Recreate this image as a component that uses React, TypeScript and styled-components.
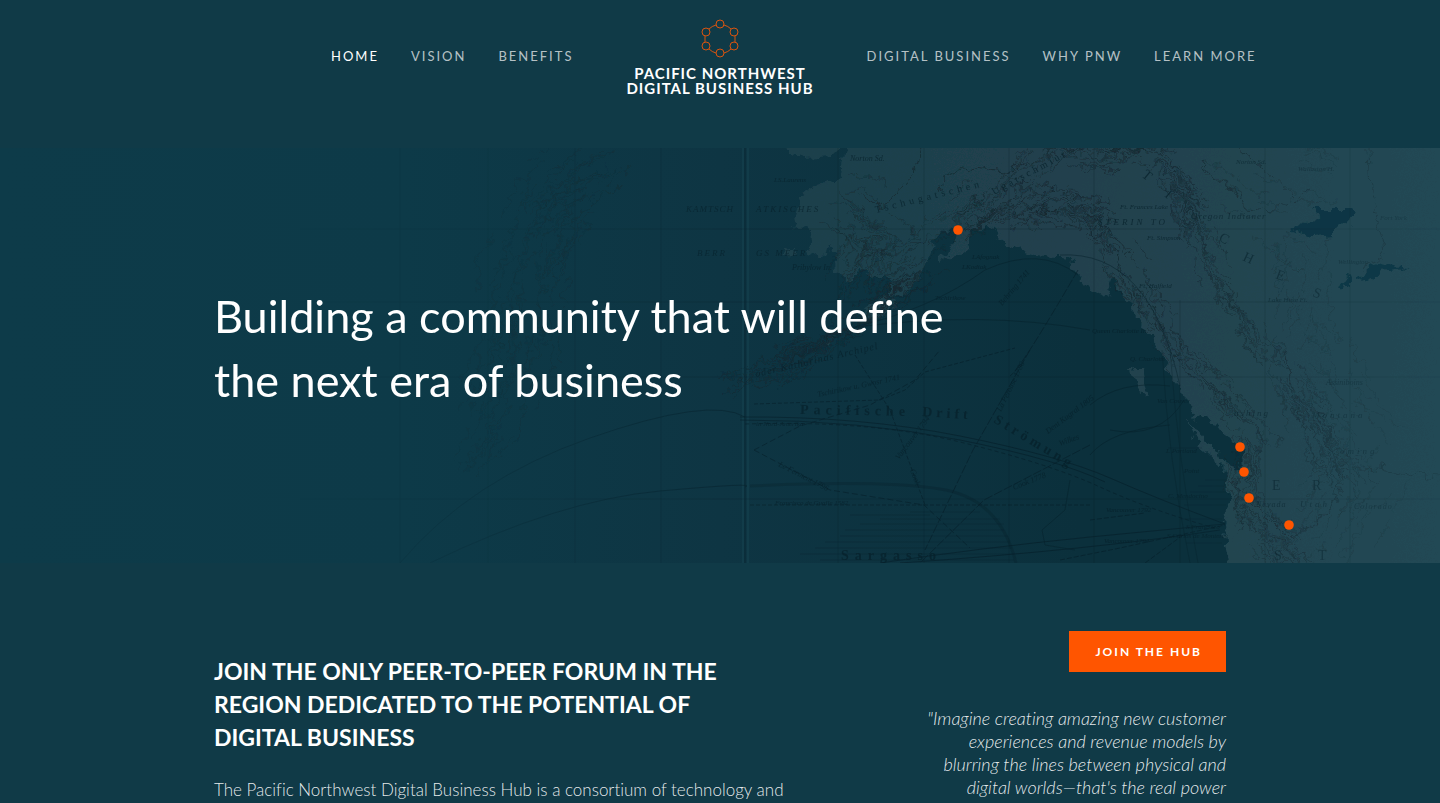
import React from "react";
import styled, { createGlobalStyle } from "styled-components";

const colors = {
  page: "#103a47",
  accent: "#ff5500",
  text: "#ffffff",
  soft: "rgba(255, 255, 255, 0.9)",
  muted: "rgba(255, 255, 255, 0.7)",
};

const GlobalStyle = createGlobalStyle`
  *, *::before, *::after { box-sizing: border-box; }
  body {
    margin: 0;
    background: ${colors.page};
    color: ${colors.text};
    font-family: Lato, "Open Sans", sans-serif;
    font-variant-ligatures: none;
    -webkit-font-smoothing: antialiased;
  }
  h1, h2, p, blockquote { margin: 0; }
`;

const Header = styled.header`
  display: grid;
  grid-template-columns: 1fr auto 1fr;
  column-gap: 53px;
  align-items: start;
  padding: 18px 24px 52px;
`;

const Nav = styled.nav<{ $side: "left" | "right" }>`
  display: flex;
  justify-content: ${(p) => (p.$side === "left" ? "flex-end" : "flex-start")};
  gap: 32px;
  padding-top: 28px;
`;

const NavLink = styled.a<{ $active?: boolean }>`
  color: ${(p) => (p.$active ? colors.text : colors.muted)};
  font-size: 13px;
  line-height: 20px;
  letter-spacing: 2px;
  text-decoration: none;
  text-transform: uppercase;
  white-space: nowrap;
`;

const Brand = styled.a`
  display: flex;
  flex-direction: column;
  align-items: center;
  color: ${colors.text};
  font-size: 15px;
  font-weight: 700;
  line-height: 15px;
  letter-spacing: 1px;
  text-align: center;
  text-decoration: none;
  text-transform: uppercase;
`;

const BrandMark = styled.svg`
  width: 40px;
  height: 40px;
  margin-bottom: 8px;
`;

const Hero = styled.section`
  position: relative;
  padding: 136px 24px 151px;
  background: linear-gradient(90deg, #0d3b49 0%, #0d3a48 28%, #0e3543 50%, #0b303c 75%, #0b303c 100%);
`;

const MapArt = styled.svg`
  position: absolute;
  inset: 0;
  width: 100%;
  height: 100%;
`;

const Container = styled.div`
  position: relative;
  max-width: 1012px;
  margin: 0 auto;
`;

const HeroTitle = styled.h1`
  font-size: 45px;
  font-weight: 400;
  line-height: 64px;
`;

const Main = styled.main`
  padding: 68px 24px 0;
`;

const Columns = styled(Container)`
  display: flex;
  justify-content: space-between;
`;

const Intro = styled.section`
  padding-top: 24px;
`;

const IntroTitle = styled.h2`
  font-size: 23px;
  font-weight: 700;
  line-height: 33px;
  text-transform: uppercase;
`;

const BodyText = styled.p`
  margin-top: 24px;
  color: ${colors.soft};
  font-size: 17px;
  font-weight: 300;
  line-height: 23px;
`;

const Aside = styled.aside`
  display: flex;
  flex-direction: column;
  align-items: flex-end;
`;

const JoinButton = styled.button`
  padding: 0 24px 0 26px;
  border: 0;
  background: ${colors.accent};
  color: ${colors.text};
  font-family: inherit;
  font-size: 12px;
  font-weight: 700;
  line-height: 41px;
  letter-spacing: 2px;
  text-transform: uppercase;
  cursor: pointer;
`;

const Quote = styled.blockquote`
  margin-top: 35px;
  color: ${colors.soft};
  font-size: 18px;
  font-style: italic;
  font-weight: 300;
  line-height: 23px;
  text-align: right;
`;

const nodes = [
  [20, 6], [34, 14], [34, 28], [20, 35], [6, 28], [6, 14],
];

function Mark() {
  return (
    <BrandMark viewBox="0 0 40 40" fill="none" stroke="#d9540f" strokeWidth="1" aria-hidden="true">
      {nodes.map(([x, y]) => (
        <circle key={`${x}-${y}`} cx={x} cy={y} r="4" />
      ))}
      <path d="M24 7Q28 8 31 11M35 18V24M31 31Q28 34 24 35M16 35Q12 34 9 31M5 24V18M9 11Q12 8 16 7" />
    </BrandMark>
  );
}

type Point = [number, number];

/* Small repeatable generator, so that the engraved lines are the same on each render. */
function makeRandom(seed: number) {
  let s = seed;
  return () => {
    s = (s * 16807) % 2147483647;
    return s / 2147483647;
  };
}

/* Ragged parallel strokes that follow a mountain range. */
function ridges(spine: Point[], count: number, spread: number, seed: number) {
  const rnd = makeRandom(seed);
  let d = "";
  for (let i = 0; i < count; i++) {
    const at = rnd() * (spine.length - 1);
    const k = Math.floor(at);
    const t = at - k;
    const [ax, ay] = spine[k];
    const [bx, by] = spine[k + 1];
    const len = Math.hypot(bx - ax, by - ay);
    const ux = (bx - ax) / len;
    const uy = (by - ay) / len;
    const off = (rnd() + rnd() - 1) * spread;
    let x = ax + (bx - ax) * t - uy * off;
    let y = ay + (by - ay) * t + ux * off;
    d += `M${x.toFixed(1)} ${y.toFixed(1)}`;
    for (let j = 0; j < 6; j++) {
      x += ux * 6 + (rnd() - 0.5) * 7;
      y += uy * 6 + (rnd() - 0.5) * 7;
      d += `L${x.toFixed(1)} ${y.toFixed(1)}`;
    }
  }
  return d;
}

const rockies: Point[] = [[1040, 150], [1150, 150], [1180, 190], [1220, 280], [1260, 340], [1310, 410], [1340, 470]];
const coastRange: Point[] = [[960, 235], [1010, 205], [1080, 212], [1130, 270], [1170, 340], [1210, 380], [1245, 430], [1240, 500], [1290, 563]];
const alaska: Point[] = [[830, 200], [880, 230], [860, 280], [930, 240], [1000, 190], [1040, 150]];
const aleutians: Point[] = [[930, 270], [880, 305], [820, 345], [760, 375]];
const siberia: Point[] = [[620, 150], [560, 190], [530, 260], [520, 340], [470, 440]];
const plains: Point[] = [[1200, 160], [1310, 210], [1290, 320], [1370, 440], [1310, 540]];

const coast =
  "M845 130V148L842 166 840 178 826 182 811 188 800 198 795 214 797 230 811 229 813 242 806 252 817 258 826 254 829 240 834 254 836 272 850 279 862 272 872 278 885 276 893 284 882 298 890 300 910 290 920 276 928 258 936 238 948 226 960 230 950 246 940 262 952 258 968 250 974 228 996 232 1006 246 1035 255 1066 258 1078 274 1092 292 1106 298 1112 280 1124 296 1136 316 1150 334 1160 352 1168 372 1181 386 1189 404 1198 420 1218 424 1230 440 1242 450 1243 470 1226 464 1206 438 1186 420 1200 446 1222 465 1226 482 1229 500 1223 525 1224 545 1227 563V590H1470V130Z" +
  "M785 130V148L792 154 805 158 830 156 838 148V130Z M780 250L792 248 794 255 782 256Z" +
  "M880 300L898 294 890 310 870 318 862 312Z M822 344L836 336 826 348Z M1131 368L1143 368 1146 388 1150 400 1138 390Z";

const places = [
  { x: 850, y: 161, size: 8, text: "Norton Sd." },
  { x: 774, y: 182, size: 7, text: "I.S.Laurens" },
  { x: 756, y: 212, size: 9, text: "ATKISCHES", gap: 2 },
  { x: 686, y: 212, size: 9, text: "KAMTSCH", gap: 1 },
  { x: 697, y: 256, size: 9, text: "BERR", gap: 2 },
  { x: 756, y: 256, size: 9, text: "GS MEER", gap: 2 },
  { x: 792, y: 270, size: 8, text: "Pribylow In." },
  { x: 972, y: 259, size: 7, text: "I.Afognak" },
  { x: 962, y: 269, size: 7, text: "I.Kodiak" },
  { x: 935, y: 300, size: 7, text: "Tschirikow" },
  { x: 1098, y: 225, size: 9, text: "STERIN TO", gap: 3 },
  { x: 1191, y: 219, size: 9, text: "Oregon Indianer", gap: 1 },
  { x: 1236, y: 164, size: 7, text: "Norton Sd." },
  { x: 1298, y: 171, size: 7, text: "Wallaston H." },
  { x: 1120, y: 209, size: 7, text: "Ft. Frances Lake" },
  { x: 1147, y: 240, size: 7, text: "Ft. Simpson" },
  { x: 1139, y: 288, size: 7, text: "Ft. Halfield" },
  { x: 1268, y: 302, size: 7, text: "Lake Huse Ft." },
  { x: 1380, y: 220, size: 7, text: "Fort York" },
  { x: 1338, y: 264, size: 7, text: "Wellington" },
  { x: 1092, y: 333, size: 7, text: "Queen Charlotte In." },
  { x: 1130, y: 361, size: 7, text: "Q. Charlotte" },
  { x: 1157, y: 403, size: 7, text: "Van Couver" },
  { x: 1166, y: 453, size: 7, text: "I. Portland" },
  { x: 1184, y: 473, size: 7, text: "Point" },
  { x: 1168, y: 498, size: 7, text: "C. Mendocino" },
  { x: 1186, y: 529, size: 7, text: "S.Francisco" },
  { x: 1167, y: 538, size: 7, text: "S.Carlos de Monterey" },
  { x: 1234, y: 416, size: 9, text: "ashing", gap: 2 },
  { x: 1256, y: 507, size: 8, text: "Nevada", gap: 1 },
  { x: 1300, y: 507, size: 9, text: "Utah", gap: 3 },
  { x: 1354, y: 509, size: 8, text: "Colorado", gap: 1 },
  { x: 1312, y: 418, size: 9, text: "Montana", gap: 3 },
  { x: 1326, y: 385, size: 8, text: "Assiniboins" },
  { x: 1340, y: 454, size: 9, text: "oming", gap: 3 },
  { x: 775, y: 505, size: 7, text: "Francisco de Gualle 1582" },
  { x: 756, y: 426, size: 7, text: "in Nord-Amerika" },
  { x: 1106, y: 512, size: 7, text: "Vancouver 1792" },
  { x: 1104, y: 543, size: 7, text: "Vancouver 1794" },
];

const voyages = [
  { x: 899, y: 460, angle: -53, text: "Vancouver 1794" },
  { x: 1001, y: 412, angle: -64, text: "La Perouse 1786" },
  { x: 1048, y: 434, angle: -37, text: "Dent Kugral 1805" },
  { x: 1060, y: 446, angle: -20, text: "Wilkes" },
  { x: 1014, y: 490, angle: -22, text: "Cook 1778" },
  { x: 1002, y: 306, angle: -50, text: "Behring 1741" },
  { x: 778, y: 466, angle: 27, text: "Le Ferment 1796" },
  { x: 818, y: 397, angle: -12, text: "Tschirikow u. Gwosr 1741" },
  { x: 910, y: 470, angle: 70, text: "Cook" },
];

const regions = [
  { x: 800, y: 414, angle: 1, size: 14, gap: 5, text: "Pacifische" },
  { x: 922, y: 416, angle: 4, size: 14, gap: 4, text: "Drift" },
  { x: 993, y: 422, angle: 31, size: 14, gap: 4, text: "Strömung" },
  { x: 841, y: 560, angle: 0, size: 14, gap: 6, text: "Sargasso" },
  { x: 876, y: 213, angle: -14, size: 10, gap: 4, text: "Tschugatschen" },
  { x: 994, y: 195, angle: -28, size: 10, gap: 3, text: "Ugatschmiut" },
];

const capitals = [
  { x: 1141, y: 176, angle: 40, text: "T" },
  { x: 1164, y: 196, angle: 40, text: "I" },
  { x: 1218, y: 240, angle: 30, text: "C" },
  { x: 1242, y: 260, angle: 25, text: "H" },
  { x: 1275, y: 278, angle: 20, text: "E" },
  { x: 1312, y: 296, angle: 20, text: "S" },
  { x: 1272, y: 490, angle: 0, text: "E" },
  { x: 1312, y: 490, angle: 0, text: "R" },
  { x: 1274, y: 560, angle: 0, text: "S" },
  { x: 1318, y: 560, angle: 0, text: "T" },
];

const offices: Point[] = [[958, 230], [1240, 447], [1244, 472], [1249, 498], [1289, 525]];

function PacificMap() {
  return (
    <MapArt viewBox="0 148 1440 415" preserveAspectRatio="xMaxYMid slice" aria-hidden="true">
      <defs>
        <filter id="ragged" filterUnits="userSpaceOnUse" x="0" y="130" width="1470" height="460">
          <feTurbulence type="fractalNoise" baseFrequency="0.09" numOctaves="3" seed="4" result="noise" />
          <feDisplacementMap in="SourceGraphic" in2="noise" scale="16" xChannelSelector="R" yChannelSelector="G" />
          <feGaussianBlur stdDeviation="0.5" />
        </filter>
        <linearGradient id="land" x1="780" x2="1440" y1="0" y2="0" gradientUnits="userSpaceOnUse">
          <stop offset="0" stopColor="#1d404c" />
          <stop offset="0.45" stopColor="#21414d" />
          <stop offset="1" stopColor="#214854" />
        </linearGradient>
        <linearGradient id="fade" x1="150" x2="1440" y1="0" y2="0" gradientUnits="userSpaceOnUse">
          <stop offset="0" stopColor="#fff" stopOpacity="0" />
          <stop offset="0.25" stopColor="#fff" stopOpacity="0.35" />
          <stop offset="0.45" stopColor="#fff" stopOpacity="0.85" />
          <stop offset="0.75" stopColor="#fff" />
          <stop offset="1" stopColor="#fff" stopOpacity="0.3" />
        </linearGradient>
        <mask id="fadeMask" maskUnits="userSpaceOnUse" x="0" y="148" width="1440" height="415">
          <rect y="148" width="1440" height="415" fill="url(#fade)" />
        </mask>
      </defs>

      <g filter="url(#ragged)">
        <path d={coast} fill="url(#land)" />
        <path d="M1312 209H1354L1348 224 1332 230 1332 236 1312 238 1290 229 1292 225 1308 226 1318 214Z" fill="#0c3644" />
        <path d="M1357 279L1373 265 1383 262 1407 269 1382 272 1365 284ZM1342 282L1351 276 1351 289 1344 287Z" fill="#0f3947" />
      </g>

      <g mask="url(#fadeMask)" fill="none" stroke="#061f29">
        <path d="M748 148V563M743 148V563" stroke="#1c4a57" strokeOpacity="0.4" strokeWidth="2" />
        <path d="M745 148V563" strokeOpacity="0.35" strokeWidth="2" />
        <path
          strokeOpacity="0.28"
          d="M400 148V563M488 148V563M575 148V563M661 148V563M838 148V563M924 148V563M1009 148V563M1094 148V563M1180 300V563M1265 148V563M1350 148V563M300 229H1440M300 302H1440M300 377H1440M300 499H1440"
        />
        <g filter="url(#ragged)" strokeOpacity="0.6" stroke="#16272e">
          <path d={ridges(rockies, 150, 22, 17)} />
          <path d={ridges(coastRange, 180, 24, 43)} />
          <path d={ridges(plains, 75, 70, 71)} strokeOpacity="0.4" />
          <path d={ridges(alaska, 85, 34, 91)} strokeOpacity="0.5" />
          <path d={ridges(aleutians, 90, 18, 29)} />
          <path d={ridges(siberia, 130, 50, 57)} strokeOpacity="0.5" />
          <path
            strokeOpacity="0.8"
            d="M920 148L912 176 896 194 886 208 860 196M940 195L944 178 964 168 1005 172 1030 160M1200 160L1215 178 1237 192 1246 208 1270 210 1290 202 1310 190M1238 148L1262 168 1292 195M1368 150L1370 190 1382 240 1384 258 1360 268M1340 470L1380 468 1440 478M1230 480L1290 540 1330 510 1345 470M1284 350L1296 400 1320 430 1344 468"
          />
        </g>
        <g strokeOpacity="0.65">
          <path d="M740 417Q860 416 960 436T1110 478T1225 524M740 420Q860 420 960 440T1105 482" />
          <path d="M400 563Q470 480 590 438T745 417M430 563Q560 500 660 491T745 487" strokeOpacity="0.55" />
          <path d="M745 424Q870 420 960 442T1100 487T1215 528" strokeDasharray="4 3" />
          <path d="M750 486Q880 480 940 489T1016 563" strokeWidth="3" strokeOpacity="0.3" />
          <path d="M1078 275Q1040 245 985 270 930 310 850 328M850 328Q980 310 1090 330" strokeOpacity="0.5" />
          <path d="M880 563Q980 548 1090 537L1225 524M900 563Q1090 550 1220 530" />
          <path d="M1030 350L973 450 925 550M1078 270Q1020 370 1010 376M1090 445L984 500 920 563" strokeDasharray="9 2" />
          <path d="M754 450L800 426 870 405 915 380 940 350M754 450L830 490 924 505 970 548" strokeDasharray="6 3" />
          <path d="M754 404L880 400 905 390 925 372 1015 348M855 355L890 410 925 505M750 505H1090" strokeDasharray="4 2" />
          <path d="M1090 405Q1120 380 1170 386M1180 386Q1150 250 1060 255M1170 425Q1110 430 1090 455M1184 400Q1160 440 1110 430M1070 480L1065 510 1042 530 1045 545 1075 550" strokeOpacity="0.5" />
          <path d="M1162 350Q1168 460 1190 563M1170 350Q1178 460 1198 563" strokeOpacity="0.35" />
          <path d="M1183 535L1145 563M1090 520L1145 513M1060 560L1120 548 1225 525" strokeDasharray="5 2" />
        </g>
        <g strokeOpacity="0.16" strokeWidth="2">
          <path d="M910 512H980M880 519H1000M860 524H1004M845 530H1004M840 536H1008M825 542H1010M815 548H1012M800 554H1014M820 560H1014M850 515H930" />
          <path d="M1205 480H1226M1198 486H1224M1190 492H1226M1184 505H1226M1180 519H1222M1186 543H1222M1168 448H1202" />
        </g>
      </g>

      <g mask="url(#fadeMask)" fill="#06212b" fillOpacity="0.8" fontFamily="'Liberation Serif', serif">
        <g fontStyle="italic">
          {places.map((p) => (
            <text key={`${p.x}-${p.y}`} x={p.x} y={p.y} fontSize={p.size} letterSpacing={p.gap ?? 0}>
              {p.text}
            </text>
          ))}
          {voyages.map((v) => (
            <text key={`${v.x}-${v.y}`} transform={`translate(${v.x} ${v.y}) rotate(${v.angle})`} fontSize="8">
              {v.text}
            </text>
          ))}
          <text transform="translate(756 377) rotate(-13)" fontSize="10" letterSpacing="1">
            oder Katharinas Archipel
          </text>
        </g>
        {regions.map((r) => (
          <text
            key={r.text}
            transform={`translate(${r.x} ${r.y}) rotate(${r.angle})`}
            fontSize={r.size}
            letterSpacing={r.gap}
            fontWeight={r.size > 10 ? 700 : 400}
          >
            {r.text}
          </text>
        ))}
        <g fontSize="14">
          {capitals.map((c) => (
            <text key={`${c.x}-${c.y}`} transform={`translate(${c.x} ${c.y}) rotate(${c.angle})`}>
              {c.text}
            </text>
          ))}
        </g>
      </g>

      {offices.map(([x, y]) => (
        <circle key={y} cx={x} cy={y} r="4.8" fill={colors.accent} />
      ))}
    </MapArt>
  );
}

export default function App() {
  return (
    <>
      <GlobalStyle />
      <Header>
        <Nav $side="left" aria-label="About the hub">
          <NavLink href="#home" $active aria-current="page">Home</NavLink>
          <NavLink href="#vision">Vision</NavLink>
          <NavLink href="#benefits">Benefits</NavLink>
        </Nav>
        <Brand href="#home">
          <Mark />
          <span>Pacific Northwest</span>
          <span>Digital Business Hub</span>
        </Brand>
        <Nav $side="right" aria-label="Digital business">
          <NavLink href="#digital-business">Digital Business</NavLink>
          <NavLink href="#why-pnw">Why PNW</NavLink>
          <NavLink href="#learn-more">Learn More</NavLink>
        </Nav>
      </Header>
      <Hero>
        <PacificMap />
        <Container>
          <HeroTitle>
            Building a community that will define
            <br />
            the next era of business
          </HeroTitle>
        </Container>
      </Hero>
      <Main>
        <Columns>
          <Intro>
            <IntroTitle>
              Join the only peer-to-peer forum in the
              <br />
              region dedicated to the potential of
              <br />
              digital business
            </IntroTitle>
            <BodyText>The Pacific Northwest Digital Business Hub is a consortium of technology and</BodyText>
          </Intro>
          <Aside>
            <JoinButton type="button">Join the Hub</JoinButton>
            <Quote>
              "Imagine creating amazing new customer
              <br />
              experiences and revenue models by
              <br />
              blurring the lines between physical and
              <br />
              digital worlds—that's the real power
            </Quote>
          </Aside>
        </Columns>
      </Main>
    </>
  );
}
